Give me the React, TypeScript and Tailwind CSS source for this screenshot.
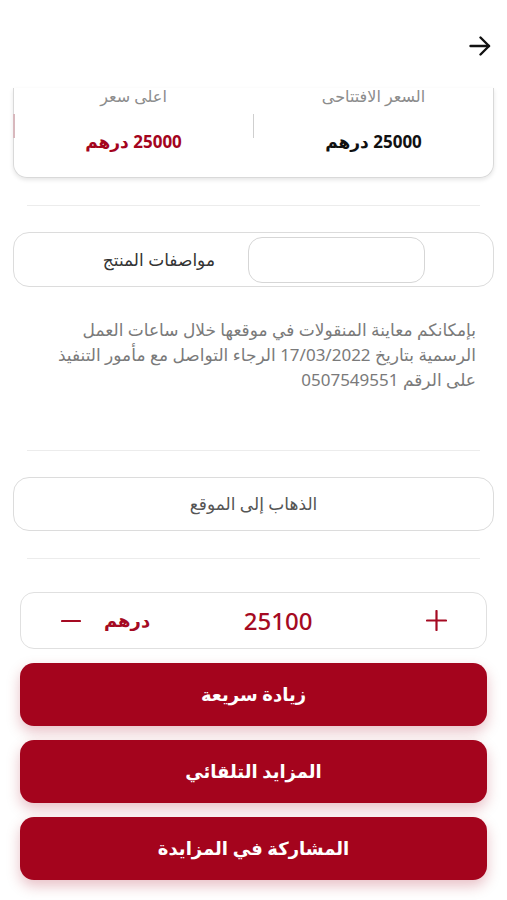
import React from "react";

function BackArrow() {
  return (
    <svg width="22" height="20" viewBox="0 0 22 20" fill="none" stroke="#111" strokeWidth="2.4" strokeLinecap="round" strokeLinejoin="round">
      <path d="M1.5 10H20" />
      <path d="M11.5 1.5L20 10l-8.5 8.5" />
    </svg>
  );
}

function Divider() {
  return <div className="mx-[27px] h-px bg-[#ececec]" />;
}

function RedButton({ label }: { label: string }) {
  return (
    <button className="flex h-[63px] w-full items-center justify-center rounded-[14px] bg-[#a4041d] text-[18px] font-bold text-white shadow-[0_6px_14px_rgba(164,4,29,0.25)]">
      {label}
    </button>
  );
}

export default function App() {
  return (
    <div dir="rtl" className="min-h-[900px] bg-white pb-[20px] font-['Noto_Sans','DejaVu_Sans',sans-serif]">
      <header className="flex h-[88px] items-start pr-[16px] pt-[36px]">
        <BackArrow />
      </header>

      <section className="relative mx-[13px] h-[90px] rounded-b-[14px] border border-t-0 border-[#d9d9d9] shadow-[0_2px_4px_rgba(0,0,0,0.10)]">
        <span className="absolute left-[-1px] top-[26px] h-[24px] w-[2px] bg-[#d8b8bd]" />
        <div className="grid h-full grid-cols-[1fr_auto_1fr]">
          <div className="flex flex-col items-center">
            <span className="-mt-px text-[16px] leading-[18px] text-[#8c8c8c]">السعر الافتتاحى</span>
            <span className="mt-[28px] text-[17px] font-bold leading-[18px] text-[#111]">25000 درهم</span>
          </div>
          <div className="mt-[26px] h-[24px] w-px self-start bg-[#cfcfcf]" />
          <div className="flex flex-col items-center">
            <span className="-mt-px text-[16px] leading-[18px] text-[#8c8c8c]">اعلى سعر</span>
            <span className="mt-[28px] text-[17px] font-bold leading-[18px] text-[#a4041d]">25000 درهم</span>
          </div>
        </div>
      </section>

      <div className="mt-[27px]">
        <Divider />
      </div>

      <div className="mx-[13px] mt-[26px] flex h-[55px] items-center rounded-[16px] border border-[#dcdcdc] pr-[68px]">
        <div className="h-[46px] w-[177px] rounded-[14px] border border-[#d6d6d6] bg-white" />
        <span className="mr-[33px] text-[17px] text-[#333]">مواصفات المنتج</span>
      </div>

      <p className="mr-[31px] ml-[36px] mt-[30px] text-[17px] leading-[25px] text-[#7a7a7a]">
        بإمكانكم معاينة المنقولات في موقعها خلال ساعات العمل الرسمية بتاريخ 17/03/2022 الرجاء التواصل مع مأمور التنفيذ على الرقم 0507549551
      </p>

      <div className="mt-[58px]">
        <Divider />
      </div>

      <button className="mx-[13px] mt-[26px] flex h-[54px] w-[481px] items-center justify-center rounded-[16px] border border-[#dcdcdc] text-[17px] text-[#555]">
        الذهاب إلى الموقع
      </button>

      <div className="mt-[27px]">
        <Divider />
      </div>

      <div dir="ltr" className="mx-[20px] mt-[33px] flex h-[57px] items-center rounded-[14px] border border-[#e0e0e0] pl-[40px] pr-[39px] text-[#a50a22]">
        <svg width="20" height="4" viewBox="0 0 20 4" stroke="#a50a22" strokeWidth="2.2" strokeLinecap="round">
          <path d="M1 2h18" />
        </svg>
        <span dir="rtl" className="ml-[23px] text-[18px] font-bold">درهم</span>
        <div className="flex-1 pr-[20px] text-center text-[24px] font-medium">25100</div>
        <svg width="21" height="21" viewBox="0 0 21 21" stroke="#a50a22" strokeWidth="2.2" strokeLinecap="round">
          <path d="M10.5 1v19M1 10.5h19" />
        </svg>
      </div>

      <div className="mx-[20px] mt-[14px] flex flex-col gap-[14px]">
        <RedButton label="زيادة سريعة" />
        <RedButton label="المزايد التلقائي" />
        <RedButton label="المشاركة في المزايدة" />
      </div>
    </div>
  );
}
